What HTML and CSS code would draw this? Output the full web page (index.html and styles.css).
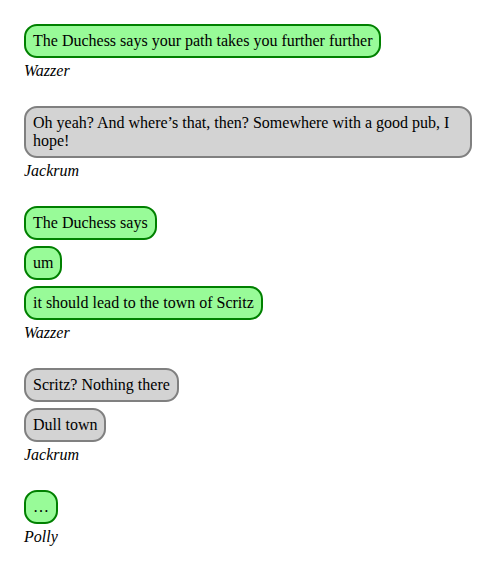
FILE: index.html
```html
<!DOCTYPE html>
<html lang="en">
<head>
    <meta charset="UTF-8">
    <meta name="viewport" content="width=device-width, initial-scale=1.0">
    <title>Conversation</title>
    <link rel="stylesheet" href="styles.css">
</head>
<body>
    <div class="conversation">
        <div class="group me">
            <div class="bubbles">
                <div class="bubble">The Duchess says your path takes you further further</div>
            </div>
            <div class="speaker">Wazzer</div>
        </div>
        <div class="group them">
            <div class="bubbles">
                <div class="bubble">Oh yeah? And where’s that, then? Somewhere with a good pub, I hope!</div>
            </div>
            <div class="speaker">Jackrum</div>
        </div>
        <div class="group me">
            <div class="bubbles">
                <div class="bubble">The Duchess says</div>
                <div class="bubble">um</div>
                <div class="bubble">it should lead to the town of Scritz</div>
            </div>
            <div class="speaker">Wazzer</div>
        </div>
        <div class="group them">
            <div class="bubbles">
                <div class="bubble">Scritz? Nothing there</div>
                <div class="bubble">Dull town</div>
            </div>
            <div class="speaker">Jackrum</div>
        </div>
        <div class="group me">
            <div class="bubbles">
                <div class="bubble">…</div>
            </div>
            <div class="speaker">Polly</div>
        </div>
    </div>
</body>
</html>
```

FILE: styles.css
```css
body {
    font-family: "Liberation Serif", "Times New Roman", serif;
    font-size: 16px;
    line-height: 18px;
    color: #000;
    background-color: #fff;
    margin: 8px;
}
.conversation {
    padding: 16px 20px 16px 16px;
}
.group {
    margin-bottom: 26px;
}
.bubbles {
    display: flex;
    flex-direction: column;
    align-items: flex-start;
    gap: 6px;
}
.bubble {
    padding: 6px 7px;
    border-radius: 13px;
    border: 2px solid;
}
.group.me .bubble {
    background-color: palegreen;
    border-color: green;
}
.group.them .bubble {
    background-color: lightgray;
    border-color: gray;
}
.speaker {
    margin-top: 4px;
    font-style: italic;
}
```
